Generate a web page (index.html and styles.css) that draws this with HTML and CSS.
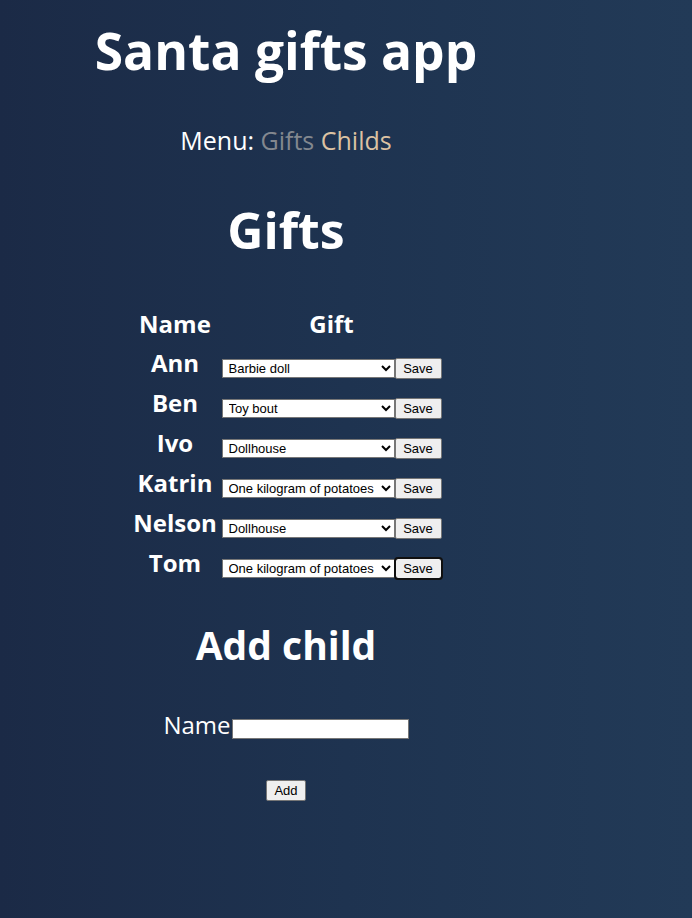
FILE: index.html
```html
<!DOCTYPE html>
<html lang="en">
<head>
<meta charset="utf-8">
<title>Santa gifts app</title>
<link rel="stylesheet" href="styles.css">
</head>
<body>
<div class="app">
  <h1 class="title">Santa gifts app</h1>
  <nav class="menu">Menu: <a class="menu-link menu-link--active" href="#">Gifts</a> <a class="menu-link menu-link--other" href="#">Childs</a></nav>
  <h2 class="section-title">Gifts</h2>
  <table class="gifts">
    <thead>
      <tr><th class="col-name">Name</th><th class="col-gift">Gift</th></tr>
    </thead>
    <tbody>
      <tr><td class="child">Ann</td><td class="gift-cell"><select class="gift-select"><option>Barbie doll</option><option>Toy bout</option><option>Dollhouse</option><option>One kilogram of potatoes</option></select><button class="btn">Save</button></td></tr>
      <tr><td class="child">Ben</td><td class="gift-cell"><select class="gift-select"><option>Toy bout</option><option>Barbie doll</option><option>Dollhouse</option><option>One kilogram of potatoes</option></select><button class="btn">Save</button></td></tr>
      <tr><td class="child">Ivo</td><td class="gift-cell"><select class="gift-select"><option>Dollhouse</option><option>Barbie doll</option><option>Toy bout</option><option>One kilogram of potatoes</option></select><button class="btn">Save</button></td></tr>
      <tr><td class="child">Katrin</td><td class="gift-cell"><select class="gift-select"><option>One kilogram of potatoes</option><option>Barbie doll</option><option>Toy bout</option><option>Dollhouse</option></select><button class="btn">Save</button></td></tr>
      <tr><td class="child">Nelson</td><td class="gift-cell"><select class="gift-select"><option>Dollhouse</option><option>Barbie doll</option><option>Toy bout</option><option>One kilogram of potatoes</option></select><button class="btn">Save</button></td></tr>
      <tr><td class="child">Tom</td><td class="gift-cell"><select class="gift-select"><option>One kilogram of potatoes</option><option>Barbie doll</option><option>Toy bout</option><option>Dollhouse</option></select><button class="btn btn--focus">Save</button></td></tr>
    </tbody>
  </table>
  <h2 class="section-title section-title--add">Add child</h2>
  <form class="add-form">
    <div class="add-row"><label class="add-label" for="child-name">Name</label><input id="child-name" class="add-input" type="text"></div>
    <div class="add-actions"><button type="button" class="btn btn--add">Add</button></div>
  </form>
</div>
</body>
</html>
```

FILE: styles.css
```css
html, body {
  height: 100%;
}
body {
  margin: 0;
  padding: 8px;
  box-sizing: border-box;
  min-height: 918px;
  background: linear-gradient(to right, #1b2a46 0%, #1e3350 50%, #223a57 100%);
  color: #ffffff;
  font-family: "Open Sans", "Noto Sans", sans-serif;
}
.app {
  width: 556px;
  text-align: center;
}
.title {
  margin: 12px 0 0;
  font-size: 51.5px;
  line-height: 60px;
  font-weight: 700;
}
.menu {
  margin-top: 44px;
  font-size: 25px;
  line-height: 32px;
}
.menu-link {
  text-decoration: none;
}
.menu-link--active {
  color: #83888f;
}
.menu-link--other {
  color: #dcc2a2;
}
.section-title {
  margin: 46px 0 0;
  font-size: 50px;
  line-height: 56px;
  font-weight: 700;
}
.gifts {
  margin: 45px auto 0;
  border-spacing: 2px;
}
.gifts th {
  font-size: 24px;
  font-weight: 700;
  height: 36px;
  padding: 0;
}
.col-name {
  min-width: 89px;
}
.child {
  font-size: 24px;
  font-weight: 700;
  height: 38px;
  padding: 0;
  vertical-align: middle;
}
.gift-cell {
  padding: 13px 0 0;
  white-space: nowrap;
  font-size: 0;
  vertical-align: middle;
}
.gift-select {
  width: 173px;
  height: 19px;
  font-family: "Liberation Sans", Arial, sans-serif;
  font-size: 13px;
  color: #000;
  background: #fff;
  border: 1px solid #767676;
  padding: 0 0 0 2px;
  vertical-align: middle;
}
.btn {
  font-family: "Liberation Sans", Arial, sans-serif;
  font-size: 13px;
  color: #000;
  background: #efefef;
  border: 1px solid #767676;
  border-radius: 2px;
  height: 21px;
  padding: 0 7px;
  vertical-align: middle;
}
.gift-cell .btn {
  width: 47px;
}
.btn--focus {
  outline: 2px solid #101010;
  outline-offset: -1px;
  border-radius: 3px;
}
.section-title--add {
  font-size: 39px;
  margin-top: 34px;
}
.add-form {
  margin-top: 38px;
}
.add-row {
  display: flex;
  justify-content: center;
  align-items: flex-end;
}
.add-label {
  font-size: 24px;
  line-height: 28px;
}
.add-input {
  width: 177px;
  height: 20px;
  box-sizing: border-box;
  border: 1px solid #767676;
  background: #fff;
  margin: 0 0 0 1px;
  padding: 1px 2px;
}
.add-actions {
  margin-top: 39px;
}
.btn--add {
  width: 40px;
  padding: 0;
}
```
